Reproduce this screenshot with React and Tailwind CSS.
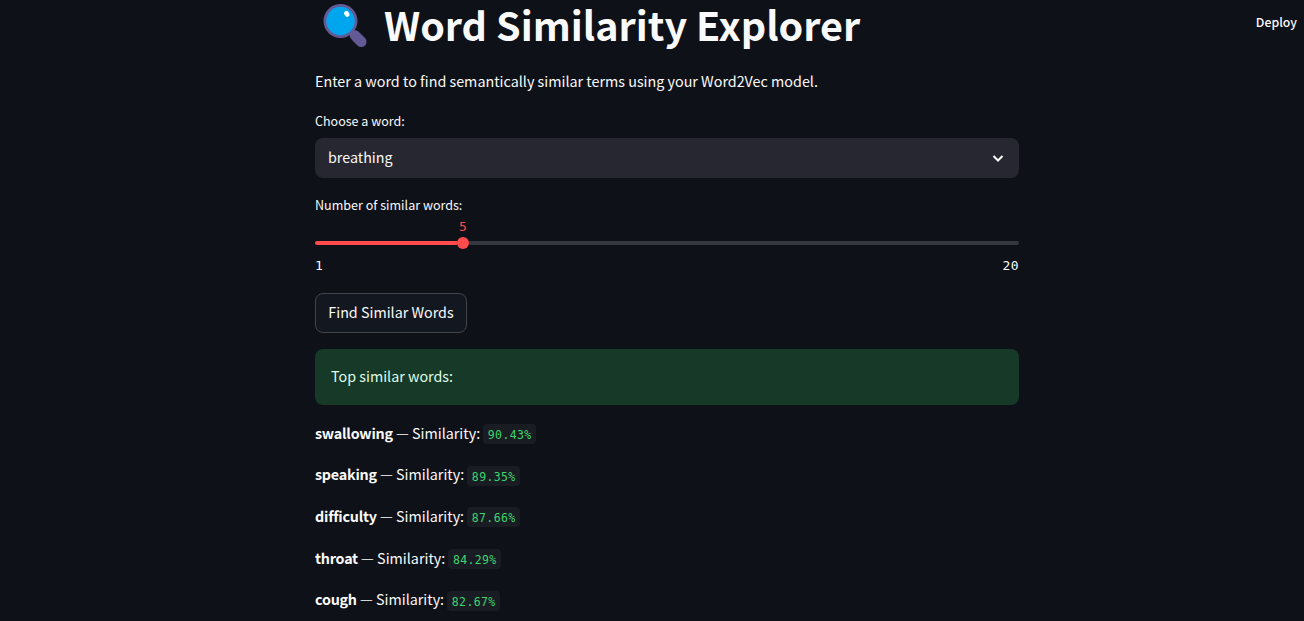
const results = [
  { word: "swallowing", score: "90.43%" },
  { word: "speaking", score: "89.35%" },
  { word: "difficulty", score: "87.66%" },
  { word: "throat", score: "84.29%" },
  { word: "cough", score: "82.67%" },
];

function Magnifier() {
  return (
    <svg className="mt-[3px] ml-[8px] h-[45px] w-[45px] shrink-0" viewBox="0 0 45 45">
      <path d="M27 34c-1.500-3.500 3.500-8 7-6.300 1.500.700 2.500 1.700 3.500 2.700l4.500 4.500a5.300 5.300 0 0 1-7.500 7.500l-4.500-4.500c-1.200-1.200-2.300-2.300-3-3.900z" fill="#635994" />
      <circle cx="17.500" cy="18" r="17" fill="#635994" />
      <circle cx="17.500" cy="18" r="14.200" fill="#00a6ed" />
      <ellipse cx="23.800" cy="10.900" rx="2.400" ry="3.100" transform="rotate(-30 23.800 10.900)" fill="#fff" />
    </svg>
  );
}

function Result({ word, score }) {
  return (
    <p className="flex h-[25.600px] items-center whitespace-pre text-[14.320px] leading-[25.600px]">
      <span className="-mt-[2.350px] font-bold tracking-[-0.220px]">{word}</span>
      <span className="-mt-[2.350px]"> — Similarity: </span>
      <code className="mt-[1px] flex h-[20px] items-center rounded-[4px] bg-[#1a1c24] px-[4.500px] pt-[3px] font-['DejaVu_Sans_Mono',monospace] text-[11.500px] leading-[17px] tracking-[0.360px] text-[#3dd56d]">
        {score}
      </code>
    </p>
  );
}

export default function App() {
  return (
    <div className="flex h-[621px] w-full overflow-hidden bg-[#0e1117] font-['Noto_Sans_CJK_SC',sans-serif] text-[#fafafa]">
      <main className="ml-[315px] flex w-[704px] shrink-0 flex-col">
        <h1 className="flex h-[53px] whitespace-nowrap text-[39.500px] leading-[47px] font-bold">
          <Magnifier />
          <span className="ml-[16px]">Word Similarity Explorer</span>
        </h1>
        <p className="mt-[15px] h-[26px] whitespace-nowrap text-[14.340px] leading-[26px]">
          <span>Enter a word to find semantically similar terms using your Word2Vec model.</span>
        </p>
        <label className="mt-[16px] h-[21px] text-[12.530px] leading-[21px]"><span>Choose a word:</span></label>
        <div className="mt-[7px] flex h-[40px] items-center justify-between rounded-[8px] bg-[#262730] px-[13px] text-[14.320px]">
          <span className="-mt-[2px]">breathing</span>
          <svg className="mr-[2px] h-[12px] w-[12px]" viewBox="0 0 12 12" fill="none" stroke="#fafafa" strokeWidth="2">
            <path d="M1.500 4 6 8.500 10.500 4" />
          </svg>
        </div>
        <label className="mt-[16px] h-[21px] text-[12.560px] leading-[21px]"><span>Number of similar words:</span></label>
        <div className="mt-[3px] flex h-[18px] w-[296px] justify-center font-['DejaVu_Sans_Mono',monospace] text-[13px] leading-[18px] text-[#ff4b4b]">
          <span>5</span>
        </div>
        <div className="mt-[1px] flex h-[12px] items-center">
          <div className="h-[4px] w-[142px] rounded-l-full bg-[#ff4b4b]" />
          <div className="h-[12px] w-[12px] rounded-full bg-[#ff4b4b]" />
          <div className="h-[4px] flex-1 rounded-r-full bg-[#343640]" />
        </div>
        <div className="mt-[7px] flex h-[20px] justify-between font-['DejaVu_Sans_Mono',monospace] text-[13px] leading-[20px] tracking-[0.400px]">
          <span>1</span>
          <span>20</span>
        </div>
        <button className="mt-[17px] flex h-[40px] w-[152px] items-center justify-center rounded-[8px] border border-[#41444c] bg-[#131720] whitespace-nowrap text-[14.320px]">
          <span className="-mt-[2px]">Find Similar Words</span>
        </button>
        <div className="mt-[16px] flex h-[56px] items-center rounded-[8px] bg-[#173928] px-[16px] text-[14.320px] text-[#dffde9]">
          <span className="-mt-[2px]">Top similar words:</span>
        </div>
        <div className="mt-[16px] flex flex-col gap-[16px]">
          {results.map((r) => (
            <Result key={r.word} {...r} />
          ))}
        </div>
      </main>
      <header className="mt-[12px] mr-[7px] ml-auto h-[21px] text-[12.300px] leading-[21px] font-medium"><span>Deploy</span></header>
    </div>
  );
}
